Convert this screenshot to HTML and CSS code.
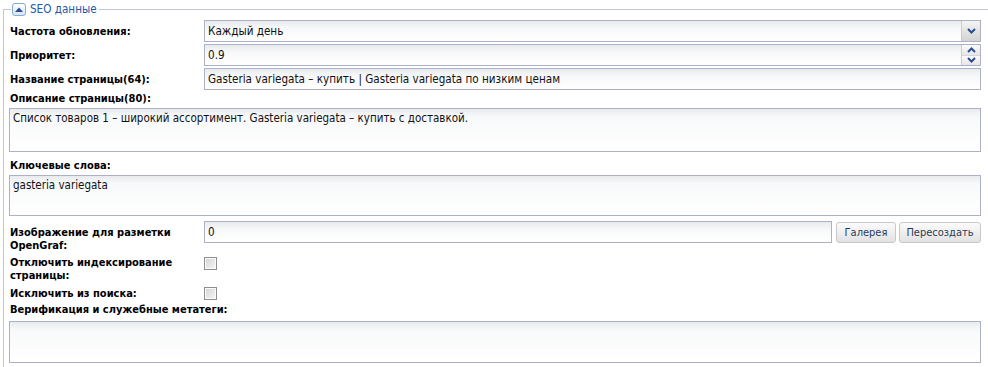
FILE: index.html
```html
<!DOCTYPE html>
<html lang="ru">
<head>
<meta charset="utf-8">
<title>SEO данные</title>
<link rel="stylesheet" href="styles.css">
</head>
<body>
<fieldset class="box">
  <legend class="box-legend"><span class="toggle"><svg class="toggle-icon" width="8" height="5" viewBox="0 0 8 5"><path d="M0 5 L4 0.5 L8 5 Z" fill="#2a4e98"/></svg></span><span class="legend-text">SEO данные</span></legend>
  <div class="form">
    <div class="row row-first">
      <span class="lbl">Частота обновления:</span>
      <div class="field select">
        <span class="value">Каждый день</span>
        <span class="drop"><svg width="9" height="6" viewBox="0 0 9 6"><path d="M1 1 L4.5 4.5 L8 1" fill="none" stroke="#2b4c8e" stroke-width="2"/></svg></span>
      </div>
    </div>
    <div class="row row-gap">
      <span class="lbl">Приоритет:</span>
      <div class="field spin">
        <span class="value">0.9</span>
        <span class="spin-btns">
          <span class="spin-btn"><svg width="9" height="6" viewBox="0 0 9 6"><path d="M1 5 L4.5 1.5 L8 5" fill="none" stroke="#2b4c8e" stroke-width="2"/></svg></span>
          <span class="spin-btn"><svg width="9" height="6" viewBox="0 0 9 6"><path d="M1 1 L4.5 4.5 L8 1" fill="none" stroke="#2b4c8e" stroke-width="2"/></svg></span>
        </span>
      </div>
    </div>
    <div class="row row-gap">
      <span class="lbl">Название страницы(64):</span>
      <div class="field"><span class="value">Gasteria variegata – купить | Gasteria variegata по низким ценам</span></div>
    </div>
    <div class="lbl lbl-block lbl-desc">Описание страницы(80):</div>
    <textarea class="area area-desc">Список товаров 1 – широкий ассортимент. Gasteria variegata – купить с доставкой.</textarea>
    <div class="lbl lbl-block lbl-keys">Ключевые слова:</div>
    <textarea class="area area-keys">gasteria variegata</textarea>
    <div class="row row-og">
      <span class="lbl lbl-og">Изображение для разметки OpenGraf:</span>
      <div class="og-field">
        <div class="field og-input"><span class="value">0</span></div>
        <button class="btn btn-gallery" type="button">Галерея</button>
        <button class="btn btn-recreate" type="button">Пересоздать</button>
      </div>
    </div>
    <div class="row row-check row-check1">
      <span class="lbl">Отключить индексирование страницы:</span>
      <span><input class="chk" type="checkbox"></span>
    </div>
    <div class="row row-check row-check2">
      <span class="lbl">Исключить из поиска:</span>
      <span><input class="chk" type="checkbox"></span>
    </div>
    <div class="lbl lbl-block lbl-meta">Верификация и служебные метатеги:</div>
    <textarea class="area area-meta"></textarea>
  </div>
</fieldset>
</body>
</html>
```
FILE: styles.css
```css
html, body {
  margin: 0;
  padding: 0;
  background: #fff;
}
body {
  font-family: "DejaVu Sans Condensed", "DejaVu Sans", sans-serif;
  font-size: 11px;
  color: #000;
  overflow: hidden;
}
.box {
  margin: 2px -30px 0 3px;
  padding: 4px 0 20px 5px;
  border: 1px solid #c5c6d0;
  min-width: 0;
}
.box-legend {
  margin-left: 2px;
  padding: 0 2px 0 1px;
  height: 14px;
  line-height: 14px;
}
.toggle {
  display: inline-block;
  box-sizing: border-box;
  width: 14px;
  height: 13px;
  border: 1px solid #86abdb;
  border-radius: 3px;
  background: linear-gradient(#ffffff, #d9e5f5);
  vertical-align: middle;
  text-align: center;
  line-height: 0;
}
.toggle-icon {
  margin-top: 3px;
}
.legend-text {
  display: inline-block;
  margin-left: 4px;
  color: #2557a8;
  font-size: 11.6px;
  vertical-align: middle;
}
.form {
  width: 972px;
}
.row {
  display: grid;
  grid-template-columns: 195px 1fr;
  align-items: center;
}
.row-gap {
  margin-top: 2px;
}
.lbl {
  font-weight: bold;
  line-height: 13px;
  padding-left: 1px;
  color: #000;
}
.lbl-block {
  display: block;
}
.lbl-desc {
  margin-top: 2px;
}
.lbl-keys {
  margin-top: 7px;
}
.lbl-meta {
  margin-top: 3px;
}
.field {
  box-sizing: border-box;
  height: 22px;
  border: 1px solid #aeb0c8;
  background: linear-gradient(#e8ebee 0, #f8f9fa 8px, #fff 100%);
  display: flex;
  align-items: center;
  font-size: 11.6px;
  color: #111;
}
.value {
  flex: 1;
  padding-left: 3px;
  white-space: nowrap;
  overflow: hidden;
}
.drop {
  align-self: stretch;
  width: 18px;
  border-left: 1px solid #c9cad4;
  background: linear-gradient(#f4f4f4, #d3d3d3);
  display: flex;
  align-items: center;
  justify-content: center;
}
.spin-btns {
  align-self: stretch;
  width: 18px;
  border-left: 1px solid #c9cad4;
  display: flex;
  flex-direction: column;
}
.spin-btn {
  flex: 1;
  display: flex;
  align-items: center;
  justify-content: center;
  background: linear-gradient(#fafafa, #e6e6e6);
}
.spin-btn + .spin-btn {
  border-top: 1px solid #d6d6dc;
}
.area {
  display: block;
  box-sizing: border-box;
  width: 100%;
  margin: 3px 0 0 0;
  padding: 2px 3px;
  border: 1px solid #aeb0c8;
  background: linear-gradient(#e8ebee 0, #f8f9fa 8px, #fff 100%);
  font-family: "DejaVu Sans Condensed", "DejaVu Sans", sans-serif;
  font-size: 11.5px;
  line-height: 15px;
  color: #111;
  resize: none;
  outline: none;
}
.area-desc {
  height: 44px;
}
.area-keys {
  height: 41px;
}
.area-meta {
  height: 42px;
  margin-top: 5px;
}
.row-og {
  margin-top: 5px;
  align-items: start;
}
.lbl-og {
  padding-top: 5px;
}
.og-field {
  display: flex;
  align-items: flex-end;
  height: 22px;
}
.og-input {
  flex: 1;
  margin-right: 2px;
}
.btn {
  box-sizing: border-box;
  height: 21px;
  margin: 0 0 0 2px;
  padding: 0 6px;
  border: 1px solid #c8c8cc;
  border-radius: 3px;
  background: linear-gradient(#fbfbfb, #e2e2e2);
  font-family: "DejaVu Sans Condensed", "DejaVu Sans", sans-serif;
  font-size: 11px;
  color: #2a3a55;
}
.btn-gallery {
  width: 60px;
}
.btn-recreate {
  width: 82px;
  margin-left: 3px;
}
.row-check {
  align-items: start;
}
.row-check1 {
  margin-top: 4px;
}
.row-check2 {
  margin-top: 5px;
}
.chk {
  appearance: none;
  -webkit-appearance: none;
  display: block;
  box-sizing: border-box;
  width: 13px;
  height: 13px;
  margin: 0;
  border: 1px solid #8e8e8e;
  box-shadow: inset 0 0 0 1px #fbfbfb;
  background: linear-gradient(135deg, #d4d4d4, #f6f6f6);
}
.row-check1 .chk {
  margin-top: 1px;
}
```
